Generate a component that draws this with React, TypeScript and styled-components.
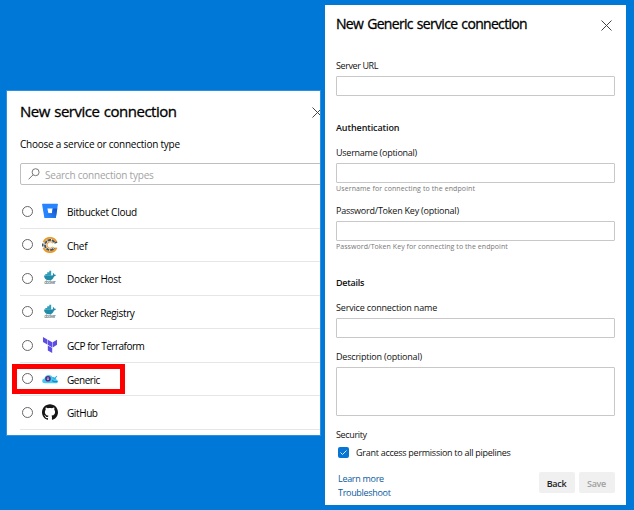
import React from 'react';
import styled, { createGlobalStyle } from 'styled-components';
import { SiTerraform, SiGithub } from 'react-icons/si';

const GlobalStyle = createGlobalStyle`
  * { box-sizing: border-box; }
  body { margin: 0; font-family: "Open Sans", "Noto Sans", sans-serif; color: #111; }
`;

const Desktop = styled.main`
  display: flex;
  align-items: flex-start;
  width: 634px;
  height: 510px;
  padding: 5px 0 0 6px;
  gap: 4px;
  background: #0078d7;
  overflow: hidden;
`;

const TypePanel = styled.section`
  width: 315px;
  height: 346px;
  margin-top: 85px;
  border: 1px solid #2e8fdf;
  padding-left: 13px;
  background: #fff;
  overflow: hidden;
`;

const FormPanel = styled.section`
  width: 301px;
  height: 500px;
  padding: 0 11px;
  background: #fff;
`;

const Header = styled.header<{ $height: number; $pad: number }>`
  display: flex;
  justify-content: space-between;
  height: ${p => p.$height}px;
  padding-top: ${p => p.$pad}px;
`;

const Title = styled.h1<{ $size: number; $track: number }>`
  margin: 0;
  font-size: ${p => p.$size}px;
  font-weight: 500;
  line-height: 20px;
  letter-spacing: ${p => p.$track}px;
  word-spacing: 1px;
  white-space: nowrap;
  color: #000;
  -webkit-text-stroke: 0.3px #000;
`;

const CloseButton = styled.button<{ $right: number }>`
  flex: none;
  display: flex;
  width: 11px;
  height: 11px;
  margin: 6px ${p => p.$right}px 0 0;
  padding: 0;
  border: 0;
  background: none;
`;

const Text = styled.span<{ $track: number }>`
  font-size: 10px;
  line-height: 14px;
  letter-spacing: ${p => p.$track}px;
  white-space: nowrap;
  color: #000;
`;

const Prompt = styled(Text)`
  display: block;
  height: 26px;
`;

const SearchBox = styled.div`
  display: flex;
  align-items: center;
  height: 22px;
  margin-right: -4px;
  padding: 0 0 0 7px;
  gap: 5px;
  border: 1px solid #bfbfbf;
  border-radius: 2px;
`;

const Placeholder = styled(Text)`
  padding-top: 1px;
  color: #a3a3a3;
`;

const TypeList = styled.ul`
  margin: 10px 0 0;
  padding: 0;
  list-style: none;
`;

const TypeRow = styled.li`
  position: relative;
  display: flex;
  align-items: center;
  height: 33.5px;
  padding-left: 2px;
  border-bottom: 1px solid #e6e6e6;
`;

const Radio = styled.span`
  width: 11px;
  height: 11px;
  border: 1px solid #666;
  border-radius: 50%;
`;

const IconSlot = styled.span`
  display: flex;
  width: 16px;
  height: 16px;
  margin: 0 9px;
`;

const TypeName = styled(Text)`
  padding-top: 2px;
`;

const Highlight = styled.span`
  position: absolute;
  left: -8px;
  top: 1px;
  width: 113px;
  height: 30px;
  border: 5px solid #fe0000;
`;

const Label = styled.label<{ $track: number; $top?: number; $bold?: boolean }>`
  display: block;
  height: 13px;
  margin-top: ${p => p.$top ?? 0}px;
  font-size: 9px;
  line-height: 12px;
  font-weight: ${p => (p.$bold ? 600 : 400)};
  letter-spacing: ${p => p.$track}px;
  white-space: nowrap;
  color: #111;
`;

const Input = styled.input`
  display: block;
  width: 279px;
  height: 20px;
  margin-top: 3px;
  border: 1px solid #c8c8c8;
  border-radius: 1px;
  outline: 0;
`;

const TextArea = styled.textarea`
  display: block;
  width: 279px;
  height: 49px;
  margin-top: 3px;
  border: 1px solid #c8c8c8;
  border-radius: 1px;
  resize: none;
  outline: 0;
`;

const Hint = styled.p<{ $track: number }>`
  margin: 0;
  height: 10px;
  font-size: 7px;
  line-height: 11px;
  letter-spacing: ${p => p.$track}px;
  white-space: nowrap;
  color: #777;
`;

const CheckRow = styled.div`
  display: flex;
  align-items: center;
  gap: 6px;
  height: 13px;
  margin: 5px 0 0 3px;
`;

const CheckBox = styled.span`
  display: flex;
  width: 11px;
  height: 11px;
  margin: -2px 1px 0 -1px;
  border-radius: 2px;
  background: #0874d3;
`;

const Footer = styled.footer`
  display: flex;
  justify-content: space-between;
  margin-top: 12px;
`;

const Links = styled.nav`
  display: flex;
  flex-direction: column;
  padding-left: 2px;
`;

const Link = styled.a`
  height: 14px;
  font-size: 9px;
  line-height: 13px;
  letter-spacing: -0.3px;
  color: #0a5a9e;
`;

const Actions = styled.div`
  display: flex;
  gap: 4px;
`;

const Button = styled.button<{ $muted?: boolean }>`
  width: 36px;
  height: 21px;
  padding: 1px 1px 0 0;
  border: 0;
  border-radius: 2px;
  background: #f0f0f0;
  font-family: inherit;
  font-size: 9px;
  font-weight: 600;
  letter-spacing: -0.3px;
  color: ${p => (p.$muted ? '#a0a0a0' : '#222')};
`;

const CloseIcon = () => (
  <svg width="11" height="11" viewBox="0 0 11 11">
    <path d="M.5.5l10 10M10.5.5l-10 10" stroke="#444" strokeWidth="1" fill="none" />
  </svg>
);

const SearchIcon = () => (
  <svg width="12" height="12" viewBox="0 0 12 12" fill="none" stroke="#777" strokeWidth="1">
    <circle cx="7.6" cy="4.2" r="3.5" />
    <path d="M5.1 6.8L.6 11.3" />
  </svg>
);

const BitbucketIcon = () => (
  <svg width="16" height="16" viewBox="0 0 16 16">
    <defs>
      <linearGradient id="bb" x1="1" y1="0.3" x2="0.3" y2="0.9">
        <stop offset="0" stopColor="#1558c8" />
        <stop offset="1" stopColor="#2684ff" />
      </linearGradient>
    </defs>
    <path d="M.6.8h14.8q.6 0 .5.6L13.9 14.5q-.1.6-.7.6H3q-.6 0-.7-.6L.1 1.4Q0 .8.6.8zM5.4 5.4l1 4.9h3.5l.8-4.9z" fill="#2684ff" fillRule="evenodd" />
    <path d="M15.3 5.4h-4.6l-.8 4.9H6.4L2.6 15q.2.1.4.1h10.2q.6 0 .7-.6z" fill="url(#bb)" />
  </svg>
);

const ChefIcon = () => (
  <svg width="16" height="16" viewBox="0 0 16 16" fill="none">
    <path d="M1.500 5.300A7 7 0 0 1 14.500 5.300M14.500 10.700A7 7 0 0 1 1.500 10.700" stroke="#f09820" strokeWidth="1.900" />
    <path d="M.8 6.600v3" stroke="#435363" strokeWidth="1.600" />
    <path d="M12.400 5.200A5.100 5.100 0 1 0 12.400 10.800" stroke="#435363" strokeWidth="2" strokeDasharray="3.400 .7" />
    <path d="M10.800 6.200A3.200 3.200 0 1 0 10.800 9.800" stroke="#f09820" strokeWidth="1.100" />
    <path d="M12.400 6.200l2.800-1" stroke="#435363" strokeWidth="1.300" />
  </svg>
);

const DockerIcon = () => (
  <svg width="16" height="16" viewBox="0 0 16 16">
    <path d="M2 5.500h8.200c.9-.2 1.100-1.200.5-2.600 1.100.3 1.700 1.100 1.800 1.900.5-.1 1.100 0 1.500.3-.3.9-1.100 1.300-2 1.300C11.200 9 9.400 10.300 6.900 10.300 4 10.300 2.100 8.600 2 5.500z" fill="#218ba8" />
    <path d="M3.300 4h5.900v1.800H3.300zM5.200 2.300h4v1.900h-4zM7.300.7h1.900v1.800H7.300z" fill="#2f9fbb" />
    <text x="2.200" y="13.800" fontSize="4.400" fontFamily="Open Sans, sans-serif" fontWeight="600" textLength="11.500" fill="#667b83">docker</text>
  </svg>
);

const GenericIcon = () => (
  <svg width="16" height="16" viewBox="0 0 16 16">
    <path d="M3 12.200C1.200 12.200.2 11.200.2 9.900S1.200 7.700 2.500 7.500C2.800 5.400 4.400 4 6.600 4c1.800 0 3.200.9 3.900 2.300C13 5.700 14.500 7 14.500 8.700c1 .3 1.400.9 1.400 1.700 0 1.100-.9 1.800-2.100 1.800z" fill="#48c8ee" />
    <path d="M10.200 9.400l1.800 1.300h3.500" fill="none" stroke="#1788ca" strokeWidth="1.300" />
    <path d="M10.500 6.300l2 1.700 2.300-3" fill="none" stroke="#2eaede" strokeWidth="1.200" />
    <circle cx="6" cy="7.700" r="2" fill="#d9def3" stroke="#4f2a86" strokeWidth="1.600" />
    <circle cx="6" cy="7.700" r=".7" fill="#4f2a86" />
  </svg>
);

const types = [
  { name: 'Bitbucket Cloud', track: -0.25, icon: <BitbucketIcon /> },
  { name: 'Chef', track: -0.3, icon: <ChefIcon /> },
  { name: 'Docker Host', track: -0.3, icon: <DockerIcon /> },
  { name: 'Docker Registry', track: -0.35, icon: <DockerIcon /> },
  { name: 'GCP for Terraform', track: -0.5, icon: <SiTerraform size={16} color="#5c4ee5" /> },
  { name: 'Generic', track: -0.45, icon: <GenericIcon />, highlighted: true },
  { name: 'GitHub', track: -0.4, icon: <SiGithub size={16} color="#161616" /> },
];

export default function App() {
  return (
    <>
      <GlobalStyle />
      <Desktop>
        <TypePanel>
          <Header $height={46} $pad={10}>
            <Title $size={15} $track={-0.49}>New service connection</Title>
            <CloseButton $right={-3} aria-label="Close"><CloseIcon /></CloseButton>
          </Header>
          <Prompt $track={-0.23}>Choose a service or connection type</Prompt>
          <SearchBox>
            <SearchIcon />
            <Placeholder $track={-0.22}>Search connection types</Placeholder>
          </SearchBox>
          <TypeList>
            {types.map(t => (
              <TypeRow key={t.name}>
                <Radio />
                <IconSlot>{t.icon}</IconSlot>
                <TypeName $track={t.track}>{t.name}</TypeName>
                {t.highlighted && <Highlight />}
              </TypeRow>
            ))}
          </TypeList>
        </TypePanel>
        <FormPanel>
          <Header $height={55} $pad={9}>
            <Title $size={14} $track={-0.68}>New Generic service connection</Title>
            <CloseButton $right={3} aria-label="Close"><CloseIcon /></CloseButton>
          </Header>
          <Label $track={-0.4}>Server URL</Label>
          <Input />
          <Label as="h2" $bold $top={26} $track={-0.1}>Authentication</Label>
          <Label $top={12} $track={-0.25}>Username (optional)</Label>
          <Input />
          <Hint $track={0.1}>Username for connecting to the endpoint</Hint>
          <Label $top={12} $track={-0.22}>Password/Token Key (optional)</Label>
          <Input />
          <Hint $track={0.06}>Password/Token Key for connecting to the endpoint</Hint>
          <Label as="h2" $bold $top={26} $track={-0.25}>Details</Label>
          <Label $top={12} $track={-0.17}>Service connection name</Label>
          <Input />
          <Label $top={13} $track={-0.2}>Description (optional)</Label>
          <TextArea />
          <Label $top={13} $track={-0.35}>Security</Label>
          <CheckRow>
            <CheckBox>
              <svg width="11" height="11" viewBox="0 0 11 11">
                <path d="M2.500 5.500l2 2 4-4" fill="none" stroke="#d8ecff" strokeWidth="1" />
              </svg>
            </CheckBox>
            <Label $track={-0.27}>Grant access permission to all pipelines</Label>
          </CheckRow>
          <Footer>
            <Links>
              <Link>Learn more</Link>
              <Link>Troubleshoot</Link>
            </Links>
            <Actions>
              <Button>Back</Button>
              <Button $muted>Save</Button>
            </Actions>
          </Footer>
        </FormPanel>
      </Desktop>
    </>
  );
}
